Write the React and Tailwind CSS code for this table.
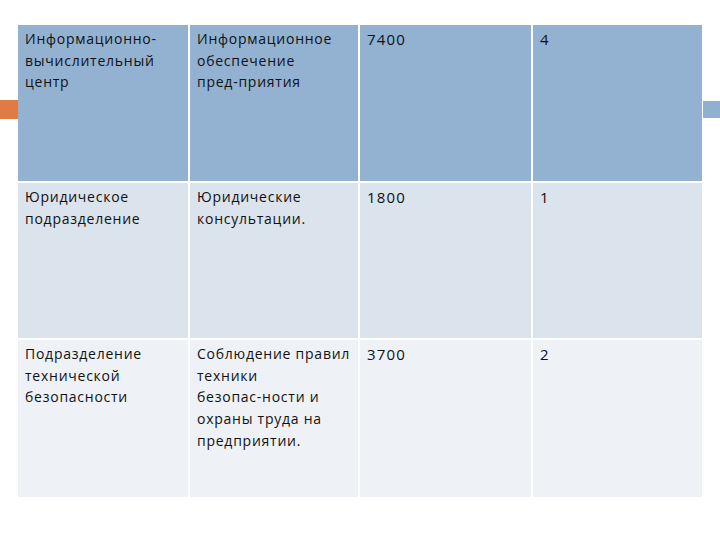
const rows = [
  {
    bg: "bg-[#93b2d1]",
    cells: [
      "Информационно-\nвычислительный\nцентр",
      "Информационное\nобеспечение\nпред-приятия",
      "7400",
      "4",
    ],
  },
  {
    bg: "bg-[#dbe3ec]",
    cells: ["Юридическое\nподразделение", "Юридические\nконсультации.", "1800", "1"],
  },
  {
    bg: "bg-[#eef2f7]",
    cells: [
      "Подразделение\nтехнической\nбезопасности",
      "Соблюдение правил\nтехники\nбезопас-ности и\nохраны труда на\nпредприятии.",
      "3700",
      "2",
    ],
  },
];

export default function App() {
  return (
    <div className="w-[720px] h-[540px] bg-white flex items-start pt-[25px] font-['Open_Sans',sans-serif] text-[#111]">
      <div className="w-[18px] h-[19px] mt-[75px] bg-[#e07b45] shrink-0"></div>
      <div className="grid grid-cols-[170px_168px_171px_169px] grid-rows-[156px_155px_157px] gap-[2px] bg-white w-[684px]">
        {rows.map((row, i) =>
          row.cells.map((cell, j) => (
            <div
              key={`${i}-${j}`}
              className={`${row.bg} pl-[7px] pt-[3px] whitespace-pre overflow-hidden ${
                j >= 2 ? "text-[15px] leading-[22px] tracking-[1.2px]" : "text-[14px] leading-[21.7px] tracking-[0.75px]"
              }`}
            >
              {cell}
            </div>
          ))
        )}
      </div>
      <div className="w-[17px] h-[17px] mt-[76px] ml-[1px] bg-[#8fb0d0] shrink-0"></div>
    </div>
  );
}
